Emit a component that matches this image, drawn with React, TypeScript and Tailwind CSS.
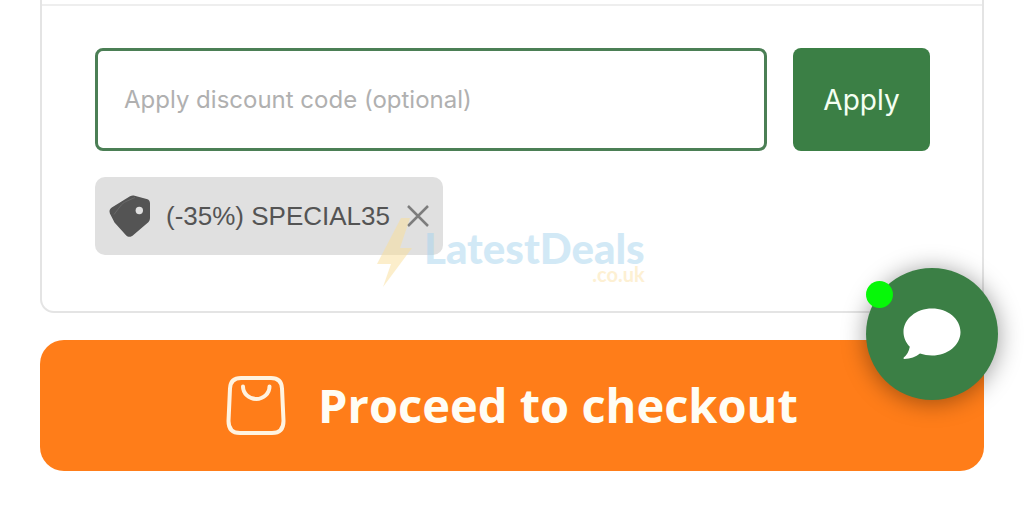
import { useState } from "react";

const TagIcon = () => (
  <svg viewBox="0 0 42 43" className="h-[43px] w-[42px]" aria-hidden="true">
    <path
      d="M21 1.3c1.600-.8 3-.9 4.600-.5l12 3.300c2.300.7 3.400 1.800 3.400 4.200v14.400c0 2-.5 3.200-1.700 4.600L24.400 40c-2.200 2.400-5.400 2.400-7.400.2L5.500 27.500.9 18.500C0 16 .6 14 2.800 12.600z"
      fill="#545454"
    />
    <path
      d="M26 2.500 17 6.500C14.500 7.700 13 9 11.500 11L5 19.500"
      fill="none"
      stroke="#6d6d6d"
      strokeWidth=".8"
    />
    <circle cx="30.300" cy="15.500" r="3.700" fill="#e0e0e0" />
  </svg>
);

const CloseIcon = () => (
  <svg viewBox="0 0 22 22" className="h-[22px] w-[22px]" aria-hidden="true">
    <path d="M1 1 21 21M21 1 1 21" stroke="#7d7d7d" strokeWidth="2.500" />
  </svg>
);

const BagIcon = () => (
  <svg viewBox="0 0 60 60" className="h-[60px] w-[60px]" aria-hidden="true">
    <g fill="none" stroke="#fff3e0" strokeWidth="4" strokeLinecap="round">
      <path d="M15 2H45Q55.500 2 56 12.500L57.500 45Q57.500 57 46 57H14Q2.500 57 2.500 45L4 12.500Q4.500 2 15 2z" />
      <path d="M17 10.500c0 7 6 12.500 13.200 12.500S43.500 17.500 43.500 10.500" />
    </g>
  </svg>
);

const ChatIcon = () => (
  <svg viewBox="0 0 58 52" className="h-[52px] w-[58px]" aria-hidden="true">
    <path
      d="M29 .5C13.300.5.5 11 .5 24c0 5.600 2.400 10.700 6.300 14.700C6 43.500 3.800 47 .8 49.600c-.6.6-.3 1.500.5 1.500 6.200-.1 11.600-2.400 15.700-5.500 3.700 1.300 7.800 2 12 2 15.700 0 28.500-10.500 28.500-23.600S44.700.5 29 .5z"
      fill="#fff"
    />
  </svg>
);

const Watermark = () => (
  <div className="pointer-events-none absolute left-[334px] top-[218px] flex gap-3 opacity-50">
    <svg viewBox="0 0 36 70" className="h-[70px] w-9" aria-hidden="true">
      <path d="M25 0h9L24 30h12L7 69l8-23H1z" fill="#fbdf98" />
    </svg>
    <div className="pt-3 text-right font-['Lato',sans-serif]">
      <p className="text-[42px] font-black leading-9 text-[#a6d4ee]">
        LatestDeals
      </p>
      <p className="text-[20px] font-bold leading-4 text-[#fce3a8]">.co.uk</p>
    </div>
  </div>
);

const App = () => {
  const [code, setCode] = useState("");
  const [applied, setApplied] = useState(true);

  return (
    <main className="bg-white px-10 font-['Inter',sans-serif]">
      <section className="relative rounded-b-[14px] border-x-2 border-b-2 border-[#e4e4e4] pt-1">
        <div className="border-t-2 border-[#eeeeee] pb-14 pl-[53px] pr-[52px] pt-[42px]">
          <form
            className="flex gap-[26px]"
            onSubmit={(e) => e.preventDefault()}
          >
            <input
              type="text"
              aria-label="Discount code"
              placeholder="Apply discount code (optional)"
              value={code}
              onChange={(e) => setCode(e.target.value)}
              className="h-[103px] min-w-0 flex-1 rounded-lg border-3 border-[#4b7f55] px-[26px] text-[24px] text-[#444] outline-none placeholder:text-[#b0b0b0]"
            />
            <button
              type="submit"
              className="w-[137px] rounded-lg bg-[#3b7f45] text-[28px] text-[#f4fff2]"
            >
              Apply
            </button>
          </form>
          {applied && (
            <div className="mt-[26px] flex h-[78px] w-fit items-center rounded-[10px] bg-[#e0e0e0] px-[14px]">
              <TagIcon />
              <span className="ml-[15px] font-['Liberation_Sans',sans-serif] text-[26px] text-[#545454]">
                (-35%) SPECIAL35
              </span>
              <button
                type="button"
                aria-label="Remove discount"
                className="ml-[17px]"
                onClick={() => setApplied(false)}
              >
                <CloseIcon />
              </button>
            </div>
          )}
        </div>
        <Watermark />
      </section>

      <button
        type="button"
        className="mt-[27px] flex h-[131px] w-full items-center justify-center gap-8 rounded-[24px] bg-[#ff7d19] font-['Open_Sans',sans-serif] text-[47px] font-bold text-[#fffdf5]"
      >
        <BagIcon />
        Proceed to checkout
      </button>

      <button
        type="button"
        aria-label="Open chat"
        className="fixed bottom-[106px] right-[26px] flex size-[132px] items-center justify-center rounded-full bg-[#3b7f45] shadow-[0_2px_24px_rgba(0,0,0,0.4)]"
      >
        <ChatIcon />
        <span className="absolute left-0 top-[13px] size-[27px] rounded-full bg-[#06f808]" />
      </button>
    </main>
  );
};

export default App;
